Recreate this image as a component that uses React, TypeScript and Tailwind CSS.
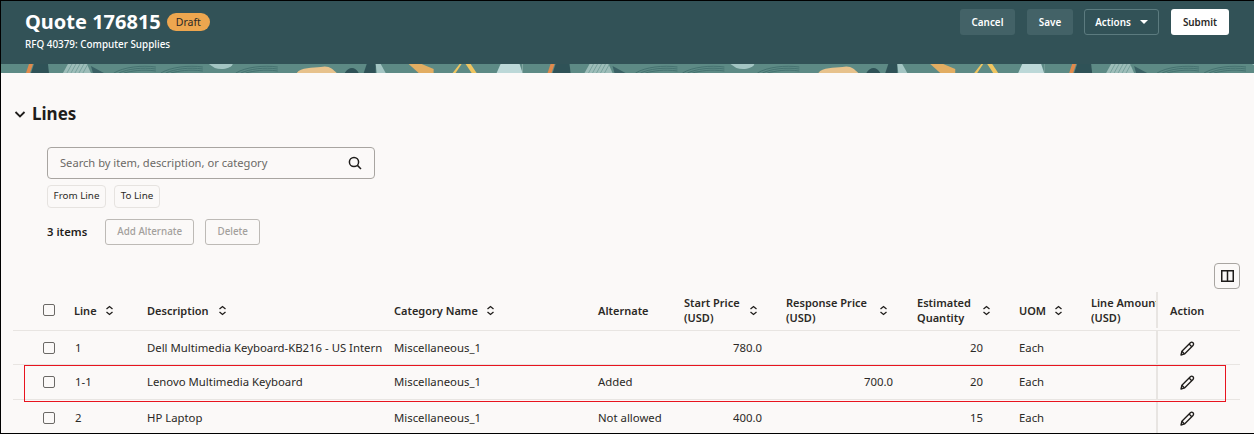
const band = (offset: number) => (
  <g key={offset} transform={`translate(${offset} 0)`}>
    <rect x="0" y="0" width="522" height="9" fill="#5d8a85" />
    <path d="M25 9 L28 0 L32 0 L29 9Z" fill="#e08a4c" />
    <path d="M30 9 L33 0 L47 0 L48 9Z" fill="#2f5257" />
    <path d="M62 9 L67 0 L86 0 L90 9Z" fill="#9dbdb9" />
    <path d="M66 9 L71 0 M70 9 L75 0 M74 9 L79 0 M78 9 L83 0 M82 9 L87 0" stroke="#6f9a96" strokeWidth="0.8" />
    <path d="M90 2 L103 9 L92 9Z" fill="#3a6165" />
    {[113, 160, 235].map((x) => (
      <g key={x} fill="none" stroke="#3f6c6b" strokeWidth="0.8">
        <path d={`M${x} 9 C${x + 10} 3 ${x + 28} 1 ${x + 42} 3`} />
        <path d={`M${x + 5} 9 C${x + 14} 5 ${x + 28} 3 ${x + 42} 5`} />
        <path d={`M${x + 10} 9 C${x + 18} 7 ${x + 28} 5 ${x + 42} 7`} />
      </g>
    ))}
    <path d="M208 0 L232 0 C230 5 220 6 214 4Z" fill="#a3c5c3" />
    <path d="M296 9 C300 3 312 4 320 3 C328 1 332 5 336 9Z" fill="#e7c28c" />
    <path d="M344 9 C348 3 354 2 358 9Z" fill="#2f5257" />
    <path d="M363 9 L366 0 L375 0 L375 9Z" fill="#2f5257" />
    <path d="M375 0 L380 0 L385 9 L376 9Z" fill="#a3c5c3" />
    <path d="M408 0 L421 0 L433 5 L433 9 L418 9Z" fill="#e2ad62" />
    <path d="M452 9 L459 0 L461 0 L455 9Z" fill="#efc561" />
    <path d="M465 0 L470 0 L476 9 L471 9Z" fill="#efc561" />
    <path d="M496 9 L500 0 L519 0 L522 9Z" fill="#bcd8d8" />
  </g>
)

const SortIcon = () => (
  <svg className="h-[11px] w-[9px] shrink-0 text-[#1f1d1b]" viewBox="0 0 9 11" fill="none" stroke="currentColor" strokeWidth="1.3">
    <path d="M1.5 4 L4.5 1.5 L7.5 4" />
    <path d="M1.5 7 L4.5 9.5 L7.5 7" />
  </svg>
)

const Check = () => <span className="block h-[12px] w-[12px] rounded-[2px] border-[1.5px] border-[#6b6966] bg-[#fbf9f8]" />

const PencilIcon = () => (
  <svg className="h-[18px] w-[18px] text-[#1f1d1b]" viewBox="0 0 24 24" fill="none" stroke="currentColor" strokeWidth="1.8" strokeLinejoin="round">
    <path d="M4 20 L5.2 15 L16.5 3.7 C17.5 2.7 19 2.7 20 3.7 C21 4.7 21 6.2 20 7.2 L8.7 18.6 Z" />
    <path d="M14.8 5.4 L18.3 8.9" />
    <path d="M5.2 15 L8.7 18.6" />
  </svg>
)

const rows = [
  { line: "1", desc: "Dell Multimedia Keyboard-KB216 - US Intern", alt: "", start: "780.0", resp: "", qty: "20", h: "h-[34px]" },
  { line: "1-1", desc: "Lenovo Multimedia Keyboard", alt: "Added", start: "", resp: "700.0", qty: "20", h: "h-[35px]" },
  { line: "2", desc: "HP Laptop", alt: "Not allowed", start: "400.0", resp: "", qty: "15", h: "h-[34px] pt-[1px]" },
]

const cols = "grid grid-cols-[62px_72px_247px_204px_86px_102px_131px_102px_72px_65px_84px]"

export default function App() {
  return (
    <div className="relative h-[434px] w-[1254px] overflow-hidden border-y border-l border-black bg-[#fbf9f8] font-['Noto_Sans',sans-serif] text-[11.35px] text-[#2b2926]">
      {/* Header */}
      <header className="flex h-[63px] items-start justify-between bg-[#325257] pl-[24px] pr-[25px] pt-[8px]">
        <div className="-mt-[1px]">
          <div className="flex items-center gap-[6px]">
            <h1 className="text-[20px] font-bold leading-[28px] text-white">Quote 176815</h1>
            <span className="rounded-full bg-[#eda64f] px-[9px] text-[10.5px] leading-[18px] text-[#2b2926]">Draft</span>
          </div>
          <p className="mt-[1px] text-[9.9px] font-medium leading-[14px] text-white">RFQ 40379: Computer Supplies</p>
        </div>
        <div className="flex items-center gap-[12px] text-[9.9px] font-semibold text-white">
          <button className="h-[26px] w-[55px] rounded-[3px] bg-[#436267]">Cancel</button>
          <button className="h-[26px] w-[46px] rounded-[3px] bg-[#436267]">Save</button>
          <button className="-ml-[1px] flex h-[26px] w-[75px] items-center justify-center gap-[9px] rounded-[3px] border border-[#5c7b7f]">
            Actions
            <span className="h-0 w-0 border-x-[4px] border-t-[4px] border-x-transparent border-t-white" />
          </button>
          <button className="h-[26px] w-[58px] rounded-[3px] bg-white text-[#2b2926]">Submit</button>
        </div>
      </header>
      <svg className="block h-[9px] w-full" viewBox="0 0 1254 9" preserveAspectRatio="none">
        {[0, 522, 1044].map(band)}
      </svg>

      {/* Lines section */}
      <div className="flex items-center gap-[5px] pl-[12px] pt-[29px]">
        <svg className="h-[14px] w-[14px] text-[#1f1d1b]" viewBox="0 0 14 14" fill="none" stroke="currentColor" strokeWidth="1.8">
          <path d="M2.5 5 L7 9.5 L11.5 5" />
        </svg>
        <h2 className="text-[17px] font-bold leading-[24px] text-[#1f1d1b]">Lines</h2>
      </div>

      <div className="pl-[46px] pt-[21px]">
        <div className="flex h-[32px] w-[328px] items-center justify-between rounded-[4px] border border-[#a8a5a1] pl-[12px] pr-[12px]">
          <span className="text-[11.15px] text-[#6b6966]">Search by item, description, or category</span>
          <svg className="h-[14px] w-[14px] text-[#1f1d1b]" viewBox="0 0 14 14" fill="none" stroke="currentColor" strokeWidth="1.5">
            <circle cx="6" cy="6" r="4.6" />
            <path d="M9.4 9.4 L13 13" />
          </svg>
        </div>
        <div className="mt-[6px] flex gap-[8px] text-[9.8px]">
          <span className="flex h-[23px] w-[59px] items-center justify-center rounded-[4px] border border-[#e6e3e0]">From Line</span>
          <span className="flex h-[23px] w-[46px] items-center justify-center rounded-[4px] border border-[#e6e3e0]">To Line</span>
        </div>
        <div className="mt-[11px] flex items-center gap-[18px]">
          <span className="text-[11.3px] font-semibold text-[#1f1d1b]">3 items</span>
          <div className="flex gap-[11px] text-[9.8px] font-medium text-[#a3a09c]">
            <span className="flex h-[26px] w-[89px] items-center justify-center rounded-[3px] border border-[#bdbab6]">Add Alternate</span>
            <span className="flex h-[26px] w-[55px] items-center justify-center rounded-[3px] border border-[#bdbab6]">Delete</span>
          </div>
        </div>
      </div>

      {/* Column picker */}
      <div className="flex justify-end pr-[14px] pt-[18px]">
        <span className="flex h-[26px] w-[26px] items-center justify-center rounded-[4px] border border-[#a8a5a1]">
          <svg className="h-[12px] w-[13px] text-[#1f1d1b]" viewBox="0 0 13 12" fill="none" stroke="currentColor" strokeWidth="1.5">
            <rect x="0.75" y="0.75" width="11.5" height="10.5" />
            <path d="M6.5 0.75 V11.25" />
          </svg>
        </span>
      </div>

      {/* Table */}
      <div className="ml-[12px] mt-[3px] w-[1227px]">
        <div className={`${cols} h-[39px] items-center border-b border-[#e8e5e2] pb-[2px] text-[11px] font-semibold leading-[15px] text-[#2b2926]`}>
          <div className="flex justify-center pl-[10px]"><Check /></div>
          <div className="-ml-[1px] flex items-center gap-[8px]">Line <SortIcon /></div>
          <div className="flex items-center gap-[9px]">Description <SortIcon /></div>
          <div className="flex items-center gap-[8px]">Category Name <SortIcon /></div>
          <div>Alternate</div>
          <div className="flex items-center gap-[9px]"><span>Start Price<br />(USD)</span><SortIcon /></div>
          <div className="flex items-center gap-[12px]"><span>Response Price<br />(USD)</span><SortIcon /></div>
          <div className="flex items-center gap-[11px]"><span>Estimated<br />Quantity</span><SortIcon /></div>
          <div className="flex items-center gap-[8px]">UOM <SortIcon /></div>
          <div className="overflow-hidden whitespace-nowrap">Line Amount<br />(USD)</div>
          <div className="flex h-full items-center border-l-2 border-[#e8e5e2] pl-[12px]">Action</div>
        </div>
        {rows.map((r) => (
          <div key={r.line} className={`${cols} ${r.h} items-center border-b border-[#e8e5e2] last:border-b-0`}>
            <div className="flex justify-center pl-[10px]"><Check /></div>
            <div>{r.line}</div>
            <div className="overflow-hidden whitespace-nowrap">{r.desc}</div>
            <div>Miscellaneous_1</div>
            <div>{r.alt}</div>
            <div className="pr-[24px] text-right">{r.start}</div>
            <div className="pr-[24px] text-right">{r.resp}</div>
            <div className="pr-[36px] text-right">{r.qty}</div>
            <div>Each</div>
            <div />
            <div className="flex h-full items-center border-l-2 border-[#e8e5e2] pl-[20px] pt-[2px]">
              <PencilIcon />
            </div>
          </div>
        ))}
      </div>

      {/* Red annotation box */}
      <div className="absolute left-[23px] top-[364px] h-[37px] w-[1202px] border border-[#e8141f]" />
    </div>
  )
}
